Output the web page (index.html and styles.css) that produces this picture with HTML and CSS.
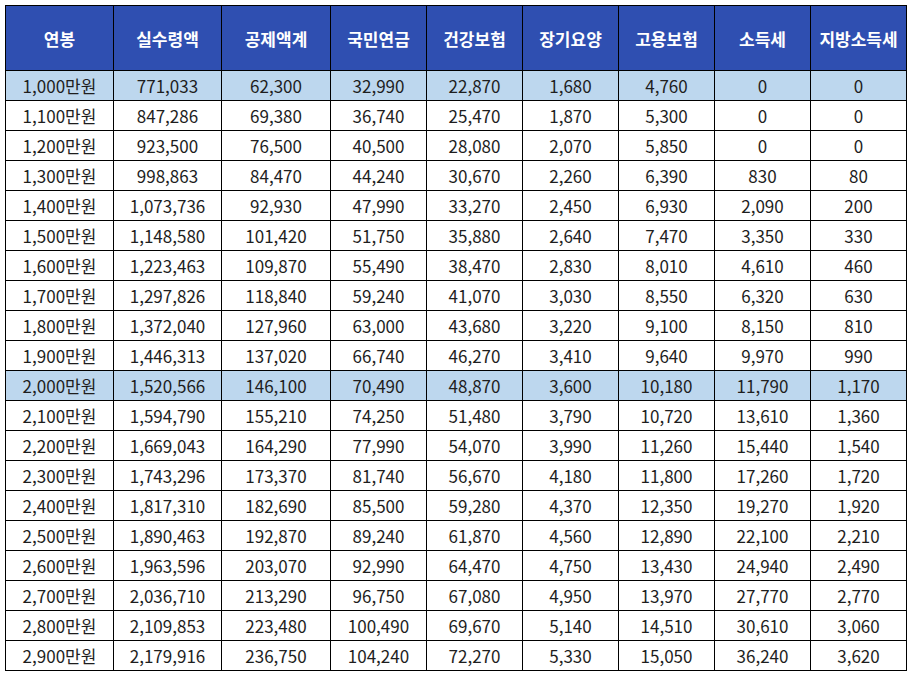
FILE: index.html
```html
<!DOCTYPE html>
<html lang="ko">
<head>
<meta charset="utf-8">
<link rel="stylesheet" href="styles.css">
</head>
<body>
<div class="wrap">
<table class="salary">
<colgroup>
<col class="c-a"><col class="c-b"><col class="c-c"><col class="c-d"><col class="c-d"><col class="c-d"><col class="c-d"><col class="c-d"><col class="c-d">
</colgroup>
<thead>
<tr><th>연봉</th><th>실수령액</th><th>공제액계</th><th>국민연금</th><th>건강보험</th><th>장기요양</th><th>고용보험</th><th>소득세</th><th>지방소득세</th></tr>
</thead>
<tbody>
<tr class="hl"><td>1,000만원</td><td>771,033</td><td>62,300</td><td>32,990</td><td>22,870</td><td>1,680</td><td>4,760</td><td>0</td><td>0</td></tr>
<tr><td>1,100만원</td><td>847,286</td><td>69,380</td><td>36,740</td><td>25,470</td><td>1,870</td><td>5,300</td><td>0</td><td>0</td></tr>
<tr><td>1,200만원</td><td>923,500</td><td>76,500</td><td>40,500</td><td>28,080</td><td>2,070</td><td>5,850</td><td>0</td><td>0</td></tr>
<tr><td>1,300만원</td><td>998,863</td><td>84,470</td><td>44,240</td><td>30,670</td><td>2,260</td><td>6,390</td><td>830</td><td>80</td></tr>
<tr><td>1,400만원</td><td>1,073,736</td><td>92,930</td><td>47,990</td><td>33,270</td><td>2,450</td><td>6,930</td><td>2,090</td><td>200</td></tr>
<tr><td>1,500만원</td><td>1,148,580</td><td>101,420</td><td>51,750</td><td>35,880</td><td>2,640</td><td>7,470</td><td>3,350</td><td>330</td></tr>
<tr><td>1,600만원</td><td>1,223,463</td><td>109,870</td><td>55,490</td><td>38,470</td><td>2,830</td><td>8,010</td><td>4,610</td><td>460</td></tr>
<tr><td>1,700만원</td><td>1,297,826</td><td>118,840</td><td>59,240</td><td>41,070</td><td>3,030</td><td>8,550</td><td>6,320</td><td>630</td></tr>
<tr><td>1,800만원</td><td>1,372,040</td><td>127,960</td><td>63,000</td><td>43,680</td><td>3,220</td><td>9,100</td><td>8,150</td><td>810</td></tr>
<tr><td>1,900만원</td><td>1,446,313</td><td>137,020</td><td>66,740</td><td>46,270</td><td>3,410</td><td>9,640</td><td>9,970</td><td>990</td></tr>
<tr class="hl"><td>2,000만원</td><td>1,520,566</td><td>146,100</td><td>70,490</td><td>48,870</td><td>3,600</td><td>10,180</td><td>11,790</td><td>1,170</td></tr>
<tr><td>2,100만원</td><td>1,594,790</td><td>155,210</td><td>74,250</td><td>51,480</td><td>3,790</td><td>10,720</td><td>13,610</td><td>1,360</td></tr>
<tr><td>2,200만원</td><td>1,669,043</td><td>164,290</td><td>77,990</td><td>54,070</td><td>3,990</td><td>11,260</td><td>15,440</td><td>1,540</td></tr>
<tr><td>2,300만원</td><td>1,743,296</td><td>173,370</td><td>81,740</td><td>56,670</td><td>4,180</td><td>11,800</td><td>17,260</td><td>1,720</td></tr>
<tr><td>2,400만원</td><td>1,817,310</td><td>182,690</td><td>85,500</td><td>59,280</td><td>4,370</td><td>12,350</td><td>19,270</td><td>1,920</td></tr>
<tr><td>2,500만원</td><td>1,890,463</td><td>192,870</td><td>89,240</td><td>61,870</td><td>4,560</td><td>12,890</td><td>22,100</td><td>2,210</td></tr>
<tr><td>2,600만원</td><td>1,963,596</td><td>203,070</td><td>92,990</td><td>64,470</td><td>4,750</td><td>13,430</td><td>24,940</td><td>2,490</td></tr>
<tr><td>2,700만원</td><td>2,036,710</td><td>213,290</td><td>96,750</td><td>67,080</td><td>4,950</td><td>13,970</td><td>27,770</td><td>2,770</td></tr>
<tr><td>2,800만원</td><td>2,109,853</td><td>223,480</td><td>100,490</td><td>69,670</td><td>5,140</td><td>14,510</td><td>30,610</td><td>3,060</td></tr>
<tr><td>2,900만원</td><td>2,179,916</td><td>236,750</td><td>104,240</td><td>72,270</td><td>5,330</td><td>15,050</td><td>36,240</td><td>3,620</td></tr>
</tbody>
</table>
</div>
</body>
</html>
```
FILE: styles.css
```css
html, body {
  margin: 0;
  padding: 0;
  background: #ffffff;
}
.wrap {
  padding: 5px;
}
.salary {
  border-collapse: collapse;
  table-layout: fixed;
  width: 901px;
  font-family: "Noto Sans CJK KR", "Noto Sans", sans-serif;
  font-size: 17px;
  color: #1e1e1e;
}
.c-a { width: 108px; }
.c-b { width: 108px; }
.c-c { width: 109px; }
.c-d { width: 96px; }
.salary th,
.salary td {
  border: 1px solid #000;
  text-align: center;
  padding: 0;
  white-space: nowrap;
  overflow: hidden;
}
.salary th {
  background: #2f4fb1;
  color: #ffffff;
  font-weight: bold;
  height: 64px;
}
.salary td {
  height: 29px;
  line-height: 29px;
}
.salary tr.hl td {
  background: #bdd7ee;
}
```
